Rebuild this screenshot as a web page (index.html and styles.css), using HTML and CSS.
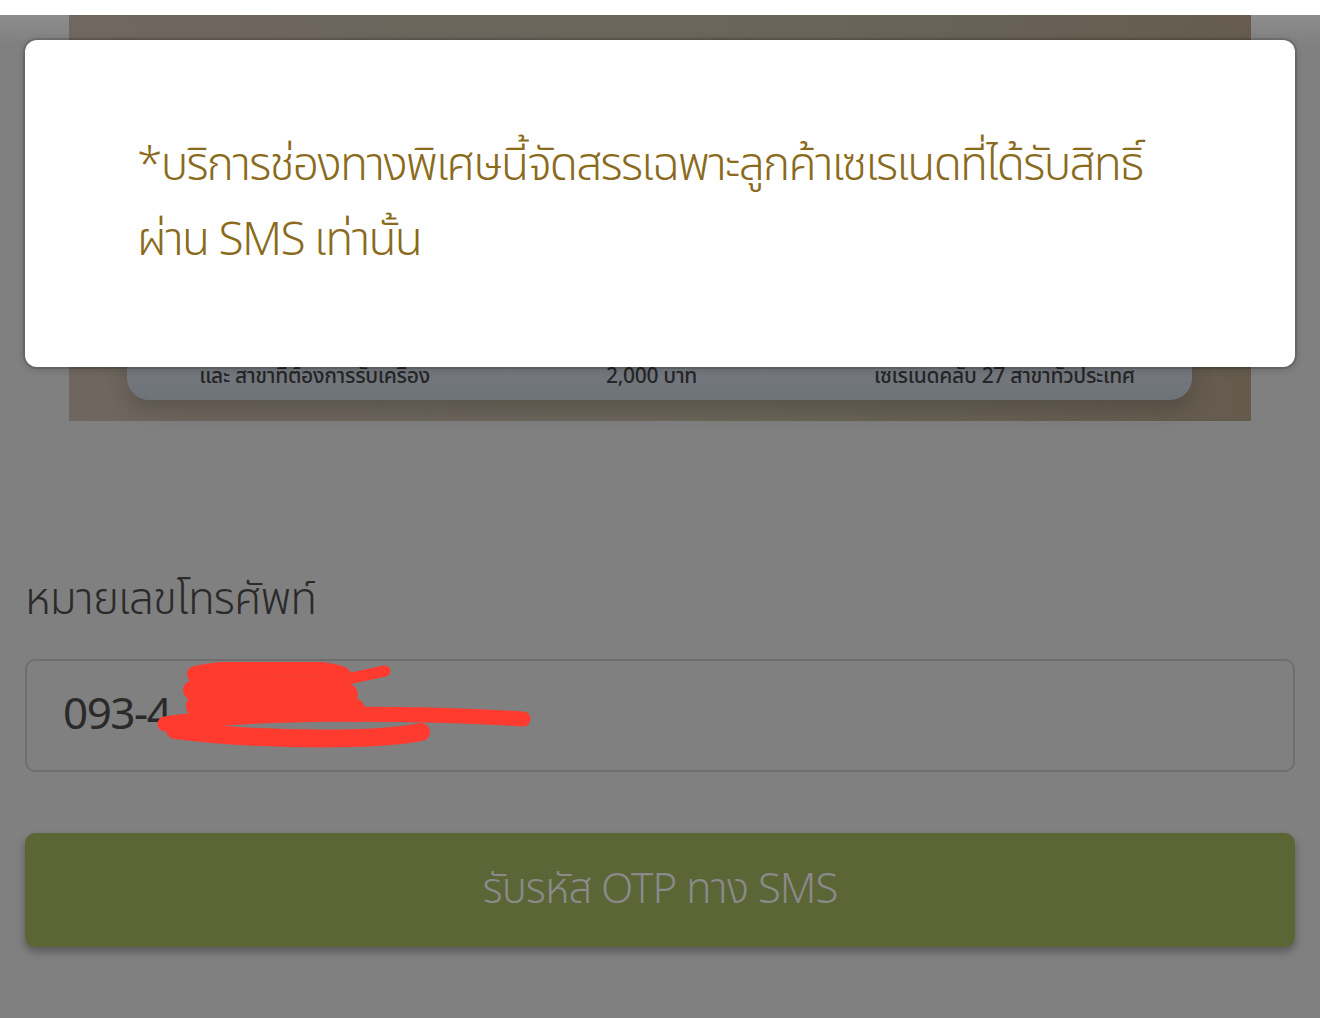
FILE: index.html
```html
<!DOCTYPE html>
<html lang="th">
<head>
  <meta charset="UTF-8" />
  <meta name="viewport" content="width=device-width, initial-scale=1.0" />
  <title>ขอรับรหัส OTP</title>
  <link rel="stylesheet" href="styles.css">
</head>
<body>
  <div class="status-bar"></div>

  <div class="screen">
    <div class="banner">
      <div class="banner-card">
        <div class="banner-col">และ สาขาที่ต้องการรับเครื่อง</div>
        <div class="banner-col">2,000 บาท</div>
        <div class="banner-col">เซเรเนดคลับ 27 สาขาทั่วประเทศ</div>
      </div>
    </div>

    <form class="otp-form">
      <label class="field-label" for="phone">หมายเลขโทรศัพท์</label>
      <div class="field">
        <input type="text" id="phone" class="field-input" value="093-4" disabled />
        <svg class="scribble" width="400" height="90" viewBox="0 0 400 90">
          <g fill="none" stroke="#ff3b30" stroke-linecap="round" stroke-linejoin="round">
            <path d="M42 12 C90 2 170 4 190 13" stroke-width="16" />
            <path d="M180 20 L232 9" stroke-width="11" />
            <path d="M40 28 C100 20 180 22 195 32" stroke-width="20" />
            <path d="M45 44 C110 36 180 38 200 48" stroke-width="24" />
            <path d="M12 62 C90 50 260 50 370 57" stroke-width="15" />
            <path d="M22 68 C120 80 230 78 268 70" stroke-width="18" />
          </g>
        </svg>
      </div>
      <button type="button" class="submit-btn" disabled>รับรหัส OTP ทาง SMS</button>
    </form>

    <div class="modal">
      <p class="modal-text">*บริการช่องทางพิเศษนี้จัดสรรเฉพาะลูกค้าเซเรเนดที่ได้รับสิทธิ์<br>ผ่าน SMS เท่านั้น</p>
    </div>
  </div>
</body>
</html>
```

FILE: styles.css
```css
* {
  box-sizing: border-box;
}

body {
  margin: 0;
  background: #fff;
  font-family: "Noto Sans Thai", "Noto Sans", sans-serif;
}

.status-bar {
  height: 15px;
  background: #fff;
}

.screen {
  position: relative;
  height: 1003px;
  padding: 0 25px;
  background: linear-gradient(#8d8d8d, #808080 30px);
}

.banner {
  margin: 0 44px;
  height: 406px;
  padding: 0 59px 21px 58px;
  display: flex;
  align-items: flex-end;
  background: linear-gradient(100deg, #6f6760, #6a6459 60%, #645b4d);
}

.banner-card {
  flex: 1;
  display: grid;
  grid-template-columns: 1fr 1fr 1fr;
  padding: 0 0 8px;
  height: 120px;
  align-items: end;
  border-radius: 0 0 22px 22px;
  background: linear-gradient(#888b90, #6e7279);
  box-shadow: 0 10px 20px rgba(40, 35, 30, 0.25);
}

.banner-col {
  text-align: center;
  font-size: 21px;
  font-weight: 500;
  letter-spacing: -0.3px;
  color: #262626;
}

.banner-col:first-child {
  padding-left: 20px;
}

.banner-col:nth-child(2) {
  padding-right: 16px;
}

.banner-col:last-child {
  padding-right: 20px;
}

.otp-form {
  padding-top: 150px;
}

.field-label {
  display: block;
  font-size: 44px;
  font-weight: 350;
  line-height: 60px;
  letter-spacing: -0.8px;
  color: #2a2a2a;
}

.field {
  position: relative;
  margin-top: 28px;
}

.field-input {
  width: 100%;
  height: 113px;
  padding: 0 36px;
  font-family: inherit;
  font-size: 44px;
  letter-spacing: -1.5px;
  color: #2a2a2a;
  background: transparent;
  border: 2px solid #6e6e6e;
  border-radius: 10px;
}

.scribble {
  position: absolute;
  left: 128px;
  top: 3px;
}

.submit-btn {
  display: block;
  width: 100%;
  height: 114px;
  margin-top: 61px;
  font-family: inherit;
  font-size: 42px;
  font-weight: 350;
  letter-spacing: -1px;
  color: #8a8a8a;
  background: #5b6535;
  border: none;
  border-radius: 10px;
  box-shadow: 0 5px 8px rgba(0, 0, 0, 0.3);
}

.modal {
  position: absolute;
  top: 25px;
  left: 25px;
  right: 25px;
  height: 327px;
  display: flex;
  align-items: center;
  padding: 0 100px 0 112px;
  background: #fff;
  border-radius: 12px;
  box-shadow: 0 0 0 2px rgba(0, 0, 0, 0.12), 0 2px 10px rgba(0, 0, 0, 0.2);
}

.modal-text {
  margin: 0;
  font-size: 46px;
  font-weight: 350;
  line-height: 75px;
  letter-spacing: -1.7px;
  color: #8a6a1c;
  white-space: nowrap;
}
```
